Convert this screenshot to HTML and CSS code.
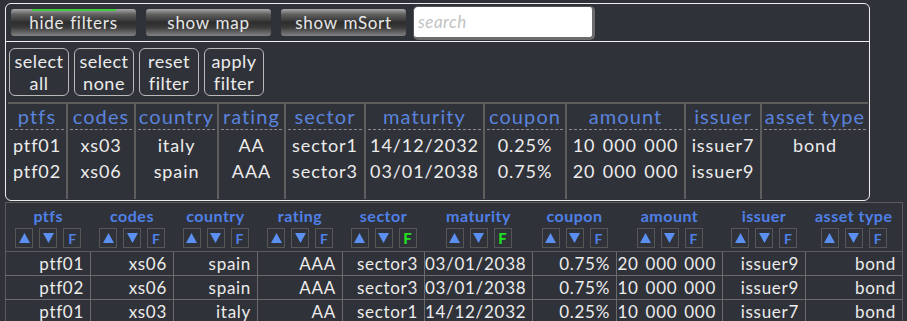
FILE: index.html
```html
<!DOCTYPE html>
<html>
<head>
<meta charset="utf-8">
<link rel="stylesheet" href="styles.css">
</head>
<body>
<div class="panel">
  <div class="toolbar">
    <button class="tbtn active">hide filters</button>
    <button class="tbtn">show map</button>
    <button class="tbtn">show mSort</button>
    <input class="search" type="text" placeholder="search">
  </div>
  <div class="fbtns">
    <button class="fbtn">select<br>all</button>
    <button class="fbtn">select<br>none</button>
    <button class="fbtn">reset<br>filter</button>
    <button class="fbtn">apply<br>filter</button>
  </div>
  <table class="ftable">
    <colgroup>
      <col class="fw59"><col class="fw68"><col class="fw83"><col class="fw67"><col class="fw80">
      <col class="fw119"><col class="fw82"><col class="fw119"><col class="fw76"><col class="fw107">
    </colgroup>
    <thead>
      <tr>
        <th><span>ptfs</span></th><th><span>codes</span></th><th><span>country</span></th><th><span>rating</span></th><th><span>sector</span></th>
        <th><span>maturity</span></th><th><span>coupon</span></th><th><span>amount</span></th><th><span>issuer</span></th><th><span>asset type</span></th>
      </tr>
    </thead>
    <tbody>
      <tr>
        <td><div>ptf01</div><div>ptf02</div></td>
        <td><div>xs03</div><div>xs06</div></td>
        <td><div>italy</div><div>spain</div></td>
        <td><div>AA</div><div>AAA</div></td>
        <td><div>sector1</div><div>sector3</div></td>
        <td><div>14/12/2032</div><div>03/01/2038</div></td>
        <td><div>0.25%</div><div>0.75%</div></td>
        <td><div>10 000 000</div><div>20 000 000</div></td>
        <td><div>issuer7</div><div>issuer9</div></td>
        <td><div>bond</div></td>
      </tr>
    </tbody>
  </table>
</div>

<table class="dtable">
  <colgroup>
    <col class="dw85"><col class="dw83"><col class="dw84"><col class="dw85"><col class="dw82">
    <col class="dw108"><col class="dw84"><col class="dw106"><col class="dw83"><col class="dw97">
  </colgroup>
  <thead>
    <tr>
      <th><div class="hname">ptfs</div><div class="sorts"><span class="sb"><svg viewBox="0 0 10 9"><polygon points="5,0 10,9 0,9"/></svg></span><span class="sb"><svg viewBox="0 0 10 9"><polygon points="0,0 10,0 5,9"/></svg></span><span class="sb f">F</span></div></th>
      <th><div class="hname">codes</div><div class="sorts"><span class="sb"><svg viewBox="0 0 10 9"><polygon points="5,0 10,9 0,9"/></svg></span><span class="sb"><svg viewBox="0 0 10 9"><polygon points="0,0 10,0 5,9"/></svg></span><span class="sb f">F</span></div></th>
      <th><div class="hname">country</div><div class="sorts"><span class="sb"><svg viewBox="0 0 10 9"><polygon points="5,0 10,9 0,9"/></svg></span><span class="sb"><svg viewBox="0 0 10 9"><polygon points="0,0 10,0 5,9"/></svg></span><span class="sb f">F</span></div></th>
      <th><div class="hname">rating</div><div class="sorts"><span class="sb"><svg viewBox="0 0 10 9"><polygon points="5,0 10,9 0,9"/></svg></span><span class="sb"><svg viewBox="0 0 10 9"><polygon points="0,0 10,0 5,9"/></svg></span><span class="sb f">F</span></div></th>
      <th><div class="hname">sector</div><div class="sorts"><span class="sb"><svg viewBox="0 0 10 9"><polygon points="5,0 10,9 0,9"/></svg></span><span class="sb"><svg viewBox="0 0 10 9"><polygon points="0,0 10,0 5,9"/></svg></span><span class="sb f on">F</span></div></th>
      <th><div class="hname">maturity</div><div class="sorts"><span class="sb"><svg viewBox="0 0 10 9"><polygon points="5,0 10,9 0,9"/></svg></span><span class="sb"><svg viewBox="0 0 10 9"><polygon points="0,0 10,0 5,9"/></svg></span><span class="sb f on">F</span></div></th>
      <th><div class="hname">coupon</div><div class="sorts"><span class="sb"><svg viewBox="0 0 10 9"><polygon points="5,0 10,9 0,9"/></svg></span><span class="sb"><svg viewBox="0 0 10 9"><polygon points="0,0 10,0 5,9"/></svg></span><span class="sb f">F</span></div></th>
      <th><div class="hname">amount</div><div class="sorts"><span class="sb"><svg viewBox="0 0 10 9"><polygon points="5,0 10,9 0,9"/></svg></span><span class="sb"><svg viewBox="0 0 10 9"><polygon points="0,0 10,0 5,9"/></svg></span><span class="sb f">F</span></div></th>
      <th><div class="hname">issuer</div><div class="sorts"><span class="sb"><svg viewBox="0 0 10 9"><polygon points="5,0 10,9 0,9"/></svg></span><span class="sb"><svg viewBox="0 0 10 9"><polygon points="0,0 10,0 5,9"/></svg></span><span class="sb f">F</span></div></th>
      <th><div class="hname">asset type</div><div class="sorts"><span class="sb"><svg viewBox="0 0 10 9"><polygon points="5,0 10,9 0,9"/></svg></span><span class="sb"><svg viewBox="0 0 10 9"><polygon points="0,0 10,0 5,9"/></svg></span><span class="sb f">F</span></div></th>
    </tr>
  </thead>
  <tbody>
    <tr><td>ptf01</td><td>xs06</td><td>spain</td><td>AAA</td><td>sector3</td><td>03/01/2038</td><td>0.75%</td><td>20 000 000</td><td>issuer9</td><td>bond</td></tr>
    <tr><td>ptf02</td><td>xs06</td><td>spain</td><td>AAA</td><td>sector3</td><td>03/01/2038</td><td>0.75%</td><td>10 000 000</td><td>issuer9</td><td>bond</td></tr>
    <tr><td>ptf01</td><td>xs03</td><td>italy</td><td>AA</td><td>sector1</td><td>14/12/2032</td><td>0.25%</td><td>10 000 000</td><td>issuer7</td><td>bond</td></tr>
  </tbody>
</table>
</body>
</html>
```

FILE: styles.css
```css
html, body {
  margin: 0;
  padding: 0;
  background: #303239;
  color: #e6e6e6;
  font-family: "Lato", "Open Sans", sans-serif;
  overflow: hidden;
}

body {
  padding: 3px 0 0 5px;
}

.panel {
  box-sizing: border-box;
  width: 865px;
  height: 198px;
  border: 1px solid #eeeeee;
  border-radius: 6px;
  overflow: hidden;
}

.toolbar {
  display: flex;
  align-items: center;
  height: 37px;
  padding-left: 5px;
  border-bottom: 1px solid #f2f2f2;
}

.tbtn {
  position: relative;
  width: 125px;
  height: 27px;
  margin-right: 10px;
  padding: 0;
  border: none;
  border-radius: 3px;
  background: linear-gradient(to bottom, #a8a8a8 0%, #606060 20%, #2e2e2e 50%, #3a3a3a 68%, #828282 100%);
  color: #e8e8e8;
  font-family: "Lato", sans-serif;
  font-size: 17px;
  letter-spacing: 0.7px;
  word-spacing: 1px;
  line-height: 27px;
}

.tbtn.active::before {
  content: "";
  position: absolute;
  left: 21px;
  top: 0;
  width: 84px;
  height: 2px;
  background: #3fcf3f;
}

.search {
  box-sizing: border-box;
  width: 182px;
  height: 34px;
  margin-left: -3px;
  padding: 0 0 0 4px;
  border: 1px solid #555;
  border-right: 3px solid #6c6c6c;
  border-bottom: 3px solid #6c6c6c;
  border-radius: 5px;
  background: #ffffff;
  font-family: "Lato", sans-serif;
  font-size: 17px;
  letter-spacing: 0.5px;
  outline: none;
}

.search::placeholder {
  color: #c2c2c2;
  font-style: italic;
}

.fbtns {
  display: flex;
  gap: 5px;
  padding: 6px 0 0 3px;
}

.fbtn {
  box-sizing: border-box;
  width: 60px;
  height: 48px;
  padding: 0;
  border: 1px solid #b8b8b8;
  border-radius: 6px;
  background: transparent;
  color: #ececec;
  font-family: "Lato", sans-serif;
  font-size: 18px;
  letter-spacing: 0.5px;
  line-height: 22px;
}

.ftable {
  margin: 6px 0 0 2px;
  width: 860px;
  height: 97px;
  table-layout: fixed;
  border-collapse: collapse;
  font-size: 18px;
  letter-spacing: 0.9px;
  word-spacing: 2px;
}

.ftable th,
.ftable td {
  border-left: 2px solid #5e5e5e;
  border-right: 2px solid #5e5e5e;
  padding: 0 3px;
  text-align: center;
}

.ftable th:first-child,
.ftable td:first-child {
  border-left: none;
}

.ftable th:last-child,
.ftable td:last-child {
  border-right: none;
}

.ftable th {
  border-top: 2px solid #5e5e5e;
  height: 26px;
  font-weight: normal;
  font-size: 20px;
  letter-spacing: 1.1px;
  word-spacing: 0;
  color: #5a83dd;
  vertical-align: bottom;
  padding: 0 2px;
}

.ftable th span {
  display: block;
  border-bottom: 1px dashed #8a8a8a;
  line-height: 25px;
  white-space: nowrap;
}

.ftable td {
  vertical-align: top;
  color: #ececec;
  padding-top: 2px;
}

.ftable td div {
  height: 26px;
  line-height: 26px;
  white-space: nowrap;
}

.fw59 { width: 59px; }
.fw68 { width: 68px; }
.fw83 { width: 83px; }
.fw67 { width: 67px; }
.fw80 { width: 80px; }
.fw119 { width: 119px; }
.fw82 { width: 82px; }
.fw76 { width: 76px; }
.fw107 { width: 107px; }

.dtable {
  margin-top: 1px;
  width: 897px;
  table-layout: fixed;
  border-collapse: collapse;
  border-top: 1px solid #5c5c5c;
  border-left: 1px solid #5c5c5c;
  border-right: 1px solid #5c5c5c;
}

.dw85 { width: 85px; }
.dw83 { width: 83px; }
.dw84 { width: 84px; }
.dw82 { width: 82px; }
.dw108 { width: 108px; }
.dw106 { width: 106px; }
.dw97 { width: 97px; }

.dtable th {
  height: 48px;
  padding: 0;
  vertical-align: top;
  border-bottom: 1px solid #5c5c5c;
}

.hname {
  margin-top: 3px;
  height: 20px;
  line-height: 20px;
  color: #4f80e8;
  font-size: 16px;
  font-weight: bold;
  letter-spacing: 0.5px;
  white-space: nowrap;
}

.sorts {
  display: flex;
  justify-content: center;
  gap: 6px;
  margin-top: 2px;
}

.sb {
  box-sizing: border-box;
  display: flex;
  align-items: center;
  justify-content: center;
  width: 18px;
  height: 20px;
  border: 1px solid #565656;
}

.sb svg {
  width: 11px;
  height: 10px;
  fill: #5b8ff0;
}

.sb.f {
  color: #4f80e8;
  font-size: 14px;
  font-weight: bold;
  font-family: "Lato", sans-serif;
}

.sb.f.on {
  color: #22dd22;
  font-size: 15px;
  font-weight: 900;
}

.dtable td {
  height: 23px;
  padding: 0 6px 0 0;
  border: 1px solid #6a6a6a;
  border-top: none;
  text-align: right;
  font-size: 17px;
  letter-spacing: 0.7px;
  word-spacing: 2px;
  line-height: 22px;
  color: #ececec;
  white-space: nowrap;
}

.dtable td:first-child { border-left: none; }
.dtable td:last-child { border-right: none; }
```
